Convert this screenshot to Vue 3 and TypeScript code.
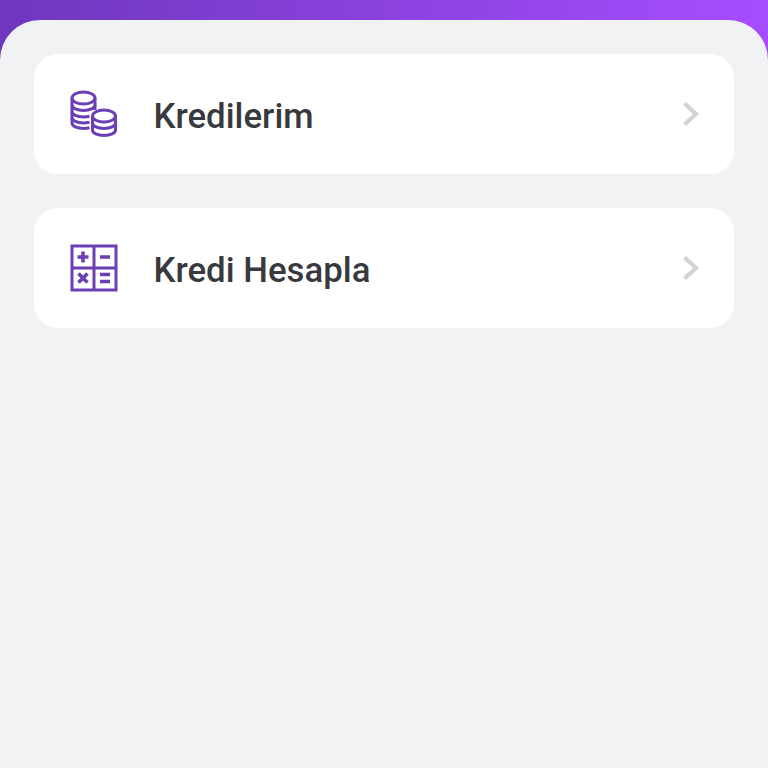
<script setup lang="ts">
const rows = [
  { id: 'coins', label: 'Kredilerim' },
  { id: 'calc', label: 'Kredi Hesapla' },
]
</script>

<template>
  <div class="page">
    <div class="sheet">
      <div v-for="row in rows" :key="row.id" class="card">
        <svg v-if="row.id === 'coins'" class="icon" viewBox="0 0 48 48" fill="none" stroke="#6b3fb5" stroke-width="3">
          <ellipse cx="13.500" cy="8" rx="11.500" ry="6" />
          <path d="M2 8V33c0 3 5 5.500 11.500 5.500 2 0 4-.2 6-.7" />
          <path d="M2 15c0 3 5 5.500 11.500 5.500S25 18 25 15" />
          <path d="M2 21.500c0 3 5 5.500 11.500 5.500 2 0 4-.2 6-.7" />
          <path d="M2 27.500c0 3 5 5.500 11.500 5.500 2 0 4-.2 6-.7" />
          <path d="M25 8V20" />
          <ellipse cx="34" cy="26" rx="11.500" ry="6" />
          <path d="M22.500 26v14c0 3 5 5.500 11.500 5.500S45.500 43 45.500 40V26" />
          <path d="M22.500 33c0 3 5 5.500 11.500 5.500S45.500 36 45.500 33" />
        </svg>
        <svg v-else class="icon" viewBox="0 0 48 48" fill="none" stroke="#6b3fb5" stroke-width="3">
          <rect x="2" y="2" width="44" height="44" />
          <path d="M24 2v44M2 24h44" />
          <path d="M13 7.500v11M7.500 13h11M30 13h10M30 30.500h10M30 37.500h10M8.500 29.500l9 9M17.500 29.500l-9 9" stroke-width="3.600" />
        </svg>
        <span class="label">{{ row.label }}</span>
        <svg class="chevron" viewBox="0 0 18 26" fill="none" stroke="#d2d3d7" stroke-width="4.200">
          <path d="M2.500 2.500 14 13 2.500 23.500" />
        </svg>
      </div>
    </div>
  </div>
</template>

<style scoped>
.page {
  width: 768px;
  height: 768px;
  padding-top: 20px;
  box-sizing: border-box;
  background: linear-gradient(90deg, #6f37bd 0%, #a64dff 100%);
}
.sheet {
  height: 748px;
  box-sizing: border-box;
  padding: 34px 34px 0;
  background: #f1f2f4;
  border-radius: 40px 40px 0 0;
  display: flex;
  flex-direction: column;
  gap: 34px;
}
.card {
  height: 120px;
  box-sizing: border-box;
  padding: 0 34px 0 36px;
  background: #fff;
  border-radius: 24px;
  display: flex;
  align-items: center;
}
.icon {
  width: 48px;
  height: 48px;
  flex: none;
}
.label {
  margin-left: 35.500px;
  flex: 1;
  padding-top: 4px;
  font-family: Roboto, sans-serif;
  font-size: 34.800px;
  font-weight: 500;
  color: #38393e;
}
.chevron {
  width: 18px;
  height: 26px;
  flex: none;
}
</style>
